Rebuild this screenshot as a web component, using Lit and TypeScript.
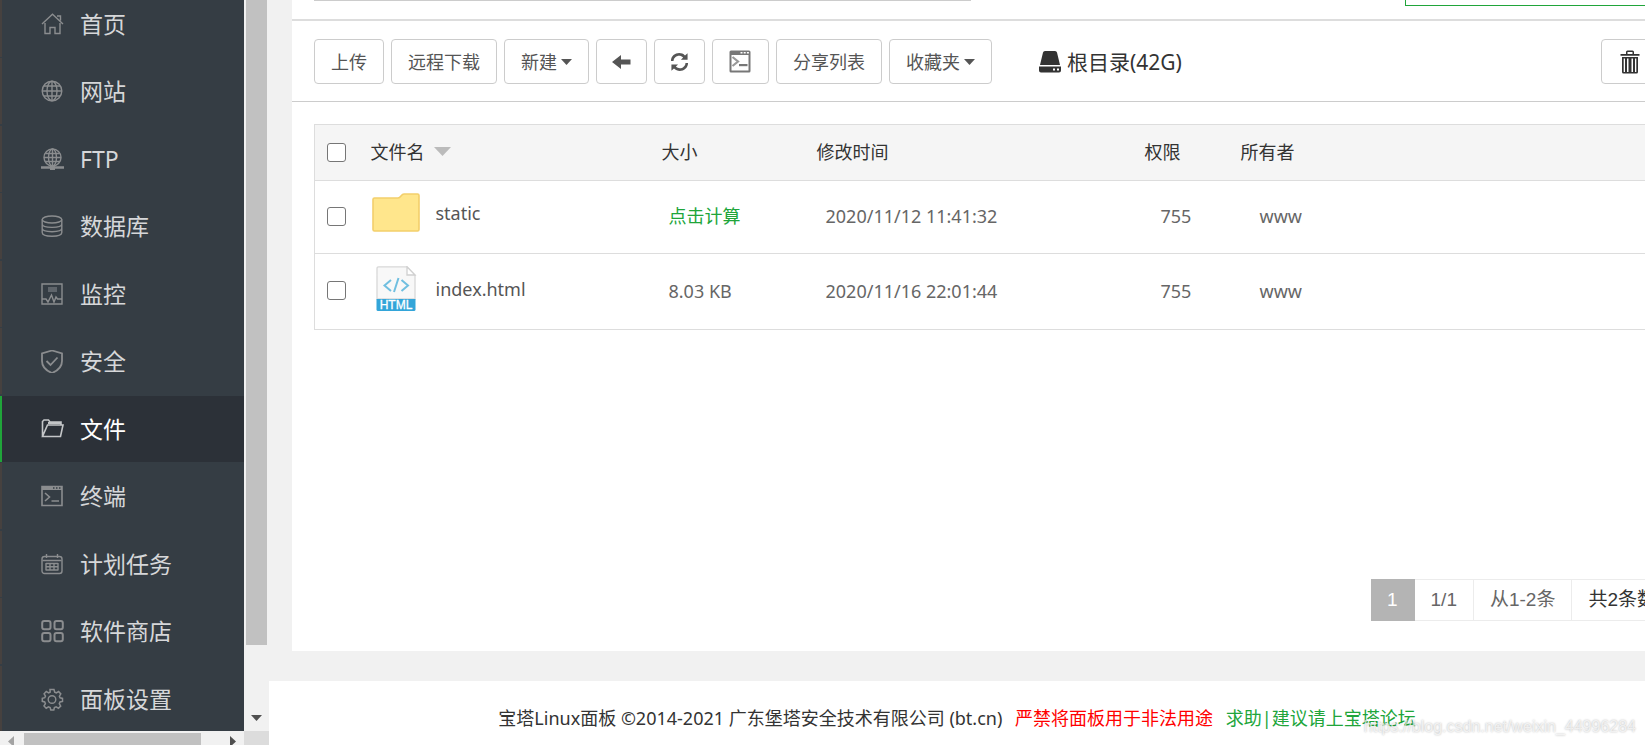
import { LitElement, html, css, svg } from "lit";
import { customElement } from "lit/decorators.js";
import { classMap } from "lit/directives/class-map.js";

const menuIcons: Record<string, unknown> = {
  home: svg`<path d="M1 11 11.500 1.300 22 11M16 3h3.500v4.500M4 10v10.500h5v-6h5v6h5V10"/>`,
  globe: svg`<circle cx="11" cy="11" r="9.800"/><ellipse cx="11" cy="11" rx="5" ry="9.800"/><path d="M11 1v20M1.500 11h19M3 6h16M3 16h16"/>`,
  ftp: svg`<circle cx="11.500" cy="9.500" r="8.500"/><ellipse cx="11.500" cy="9.500" rx="4" ry="8.500"/><path d="M11.500 1v17M3 9.500h17M4.500 5.500h14M4.500 13.500h14"/><path stroke-width="2.500" d="M0 19.500h23"/><path stroke-width="4" d="M9 20h5"/>`,
  database: svg`<ellipse cx="11" cy="4.500" rx="9.800" ry="3.500"/><path d="M1.200 4.500v13c0 5 19.600 5 19.600 0v-13M1.200 9c0 4.500 19.600 4.500 19.600 0M1.200 13.300c0 4.500 19.600 4.500 19.600 0"/>`,
  monitor: svg`<path d="M1 1h20v20H1z"/><path stroke="none" fill="#5f656b" d="M7 4h9v5H7z"/><path d="M1 16h4l2 3 3.500-7 2.500 7 2-5 1.500 2H21"/>`,
  shield: svg`<path stroke-width="1.800" d="M11 0.500 21 3.500V11c0 6-5 10-10 12C6 21 1 17 1 11V3.500z"/><path stroke-width="1.800" d="m5.500 11 4 4 7-7.500"/>`,
  folder: svg`<path stroke-width="1.600" d="M1.500 19V3.500L3 2h4.500L9 4h11v3M6.500 7H22l-2.500 11.500H1.500z"/><path stroke-width="2" d="M7 5h13"/>`,
  terminal: svg`<path stroke-width="1.600" d="M1 1.500h20v19H1z"/><path stroke="none" fill="currentColor" d="M1 1h20v4H1z"/><path stroke="#353d44" stroke-width="1.500" d="M12 3h1.500M15 3h1.500M18 3h1.500"/><path stroke-width="1.600" d="m4 8 4.500 4L4 16M10.500 16h7.500"/>`,
  calendar: svg`<rect x="1" y="3.500" width="20" height="17" rx="2.500"/><path d="M1.500 7.500h19M5.500 1v4M16.500 1v4M5 10.500h12M5 13.700h12M5 17h12M5 10v7.500M9 10v7.500M13 10v7.500M17 10v7.500"/>`,
  apps: svg`<g stroke-width="2"><rect x="1.200" y="1" width="8.300" height="8.300" rx="2"/><rect x="13.500" y="1" width="8.300" height="8.300" rx="2"/><rect x="1.200" y="13" width="8.300" height="8.300" rx="2"/><rect x="13.500" y="13" width="8.300" height="8.300" rx="2"/></g>`,
  gear: svg`<path stroke-width="1.500" d="m9 1.500 4 0 .7 2.600 1.600.7L17.600 3.500l2.200 2.400-1.400 2.300.7 1.600 2.400.6v3l-2.500.6-.7 1.700 1.400 2.300-2.300 2.200-2.300-1.300-1.700.7-.6 2.400h-3l-.7-2.500-1.600-.7-2.300 1.400-2.200-2.300 1.400-2.300-.7-1.700-2.400-.6v-3l2.500-.6.7-1.600-1.400-2.300 2.200-2.300 2.400 1.300 1.500-.7z"/><circle cx="11" cy="11.500" r="3.800"/>`,
};

const menu = [
  { icon: "home", label: "首页" },
  { icon: "globe", label: "网站" },
  { icon: "ftp", label: "FTP" },
  { icon: "database", label: "数据库" },
  { icon: "monitor", label: "监控" },
  { icon: "shield", label: "安全" },
  { icon: "folder", label: "文件", active: true },
  { icon: "terminal", label: "终端" },
  { icon: "calendar", label: "计划任务" },
  { icon: "apps", label: "软件商店" },
  { icon: "gear", label: "面板设置" },
];

const folderIcon = html`<svg class="file-icon" width="48" height="39" viewBox="0 0 48 39" aria-hidden="true">
  <path d="M1 6.500Q1 5 2.500 5H26c3 0 3-4 6-4h13.500Q47 1 47 2.500v34q0 1.500-1.500 1.500h-43Q1 38 1 36.500z" fill="#ffe68c" stroke="#f3cf6b" stroke-width="1.600"/>
</svg>`;

const htmlIcon = html`<svg class="file-icon" width="48" height="45" viewBox="0 0 48 45" aria-hidden="true">
  <path d="M5 33V2.500Q5 .8 6.500.8H35L43 9v24z" fill="#f8f8f8" stroke="#d8d8d8" stroke-width="1.300"/>
  <path d="M35 .8V9h8z" fill="#fff" stroke="#d0d0d0" stroke-width="1.300"/>
  <path d="m19 14-6.500 5.500L19 25M29.500 14l6.500 5.500-6.500 5.500M26.500 12l-4.500 14" fill="none" stroke="#70bfe0" stroke-width="2"/>
  <path d="M4.500 33h39v10.500q0 1.500-1.500 1.500H6q-1.500 0-1.500-1.500z" fill="#33a5d9"/>
  <text x="24" y="43" text-anchor="middle" font-family="Liberation Sans, sans-serif" font-size="12" fill="#fff" stroke="#fff" stroke-width=".3">HTML</text>
</svg>`;

const files = [
  { name: "static", icon: folderIcon, size: "", time: "2020/11/12 11:41:32", mode: "755", owner: "www" },
  { name: "index.html", icon: htmlIcon, size: "8.03 KB", time: "2020/11/16 22:01:44", mode: "755", owner: "www" },
];

@customElement("bt-sidebar")
class BtSidebar extends LitElement {
  static styles = css`
    :host {
      display: grid;
      grid-template-columns: 244px 25px;
      grid-template-rows: 1fr 14px;
      min-height: 0;
      font-family: "Noto Sans", "Noto Sans CJK SC", sans-serif;
    }
    .nav { background: #353d44; overflow: hidden; }
    .list { list-style: none; margin: -9px 0 0; padding: 0; }
    .item { height: 66px; margin-bottom: 1px; }
    .item:nth-child(even) { margin-bottom: 2px; }
    .link {
      display: flex; align-items: center; gap: 16px;
      box-sizing: border-box; height: 100%; padding-left: 39px;
      border-left: 2px solid #46413f;
      color: #d6d7d9; font-size: 23px; line-height: 34px; text-decoration: none;
    }
    .link.active { background: #2c3138; border-left-color: #20a53a; color: #fff; }
    .glyph { color: #8b8d8f; fill: none; stroke: currentColor; stroke-width: 1.4; flex: none; }
    .active .glyph { color: #c4c6c8; }
    .vbar { background: #f1f1f1; display: flex; flex-direction: column; padding: 0 2px; }
    .vthumb { flex: 0 0 calc(100% - 86px); background: #c1c1c1; }
    .down { width: 11px; height: 6px; margin: auto auto 10px; fill: #505050; }
    .hbar { background: #f1f1f1; display: flex; padding: 2px 8px 0; justify-content: space-between; overflow: hidden; }
    .hthumb { flex: 0 0 177px; background: #c1c1c1; margin-left: -20px; }
    .arrow { width: 6px; height: 11px; margin-top: 3px; fill: #a3a3a3; flex: none; }
    .arrow.dark { fill: #505050; }
    .corner { background: #dcdcdc; }
  `;
  render() {
    return html`
      <nav class="nav">
        <ul class="list">
          ${menu.map((m) => html`<li class="item">
            <a class=${classMap({ link: true, active: !!m.active })} href="#">
              <svg class="glyph" width="23" height="23" viewBox="0 0 23 23" aria-hidden="true">${menuIcons[m.icon]}</svg>
              <span>${m.label}</span>
            </a>
          </li>`)}
        </ul>
      </nav>
      <div class="vbar">
        <div class="vthumb"></div>
        <svg class="down" viewBox="0 0 11 6"><path d="M0 0h11L5.500 6z"/></svg>
      </div>
      <div class="hbar">
        <svg class="arrow" viewBox="0 0 6 11"><path d="M6 0v11L0 5.500z"/></svg>
        <div class="hthumb"></div>
        <svg class="arrow dark" viewBox="0 0 6 11"><path d="M0 0v11l6-5.500z"/></svg>
      </div>
      <div class="corner"></div>
    `;
  }
}

@customElement("app-root")
class AppRoot extends LitElement {
  static styles = css`
    :host {
      display: grid;
      grid-template-columns: auto minmax(0, 1fr);
      grid-template-rows: minmax(0, 1fr);
      height: 100vh;
      overflow: hidden;
      position: relative;
      background: #f1f1f1;
      color: #333;
      font-family: "Noto Sans", "Noto Sans CJK SC", sans-serif;
      font-size: 18px;
      line-height: 26px;
    }
    .main { display: flex; flex-direction: column; min-width: 0; overflow: hidden; }
    .panel {
      flex: 1; display: flex; flex-direction: column;
      margin: 0 -69px 30px 23px; background: #fff;
    }
    .pathbar {
      display: flex; justify-content: space-between; align-items: flex-start;
      height: 19px; padding: 0 22px; border-bottom: 2px solid #ddd;
    }
    .path {
      box-sizing: border-box; width: 657px; height: 42px; margin: -41px 0 0;
      border: 1px solid #ccc; outline: 0;
    }
    .search {
      box-sizing: border-box; width: 287px; height: 44px; margin: -38px 0 0;
      border: 1px solid #20a53a; background: #fff;
    }
    .toolbar {
      display: flex; align-items: center; gap: 7px;
      padding: 18px 22px 17px; border-bottom: 1px solid #ccc;
    }
    .btn {
      display: flex; align-items: center; justify-content: center; gap: 4px;
      box-sizing: border-box; height: 45px; padding: 0 16px;
      border: 1px solid #ccc; border-radius: 4px; background: #fff;
      color: #555; font: inherit; white-space: nowrap;
    }
    .btn.small { padding: 0 15px; }
    .btn svg { fill: currentColor; flex: none; }
    .disk { display: flex; align-items: center; gap: 6px; margin-left: 40px; font-size: 21px; line-height: 30px; }
    .btn.trash { margin-left: auto; padding: 0 51px 0 18px; color: #333; }
    .table {
      margin: 22px 22px 0; border-collapse: collapse; table-layout: fixed;
      min-width: calc(100% - 44px); border: 1px solid #ddd;
    }
    .c-check { width: 46px; } .c-name { width: 291px; } .c-size { width: 155px; }
    .c-time { width: 328px; } .c-mode { width: 96px; }
    th {
      height: 53px; padding: 0 0 2px 10px; background: #f5f5f5; border-bottom: 1px solid #ddd;
      font-weight: 400; text-align: left;
    }
    td { height: 70px; padding: 0 0 2px 17px; border-bottom: 1px solid #ddd; color: #666; }
    th.check, td.check { padding-left: 12px; }
    th.check { padding-bottom: 0; }
    td.name { height: auto; padding: 12px 0 18px 11px; vertical-align: top; }
    td.time { padding-left: 19px; }
    td.mode { padding-left: 26px; }
    td.owner { padding-left: 29px; }
    .box {
      appearance: none; display: block; box-sizing: border-box; width: 19px; height: 19px; margin: 0;
      border: 1px solid #767676; border-radius: 3px; background: #fff;
    }
    .sort { display: flex; align-items: center; gap: 9px; }
    .sort svg { fill: #bbb; }
    .file { display: flex; align-items: center; gap: 16px; color: #555; text-decoration: none; }
    .file-icon { display: block; }
    .green { color: #20a53a; text-decoration: none; }
    .pager {
      display: flex; justify-content: flex-end; margin: auto 22px 30px;
      font-family: "Liberation Sans", "Noto Sans CJK SC", sans-serif; font-size: 19px; line-height: 40px;
    }
    .page {
      padding: 0 16px; border: 1px solid #ececec; border-left: 0; color: #666; white-space: nowrap;
    }
    .page.current { background: #b4b4b4; border-color: #b4b4b4; color: #fff; }
    .page.total { color: #333; }
    .footer { padding: 24px 0 14px; background: #fff; text-align: center; white-space: nowrap; }
    .warn { color: #f00; margin: 0 8px; }
    .watermark {
      position: absolute; right: 9px; bottom: 7px;
      font-family: "Liberation Sans", sans-serif; font-size: 16px; line-height: 22px;
      color: rgba(255, 255, 255, 0.7); text-shadow: 0 0 2px rgba(0, 0, 0, 0.3);
    }
  `;
  render() {
    const caret = html`<svg width="11" height="6" viewBox="0 0 11 6" aria-hidden="true"><path d="M0 0h11L5.500 6z"/></svg>`;
    return html`
      <bt-sidebar></bt-sidebar>
      <main class="main">
        <section class="panel">
          <div class="pathbar">
            <input class="path" type="text" aria-label="路径">
            <button class="search" aria-label="搜索"></button>
          </div>
          <div class="toolbar">
            <button class="btn">上传</button>
            <button class="btn">远程下载</button>
            <button class="btn">新建${caret}</button>
            <button class="btn small" aria-label="后退">
              <svg width="19" height="16" viewBox="0 0 19 16"><path d="M0 8 9 1v4.500h9.500v5H9V15z"/></svg>
            </button>
            <button class="btn small" aria-label="刷新">
              <svg width="19" height="20" viewBox="0 0 20 20"><path d="M1 9C1 1 11-2 15.800 3.200L18.500.8V7.500h-7l2.300-2.300C10 1.500 4 4 3.700 9zM19 11c0 8-10 11-14.800 5.800L1.500 19.200V12.500h7L6.200 14.800C10 18.500 16 16 16.300 11z"/></svg>
            </button>
            <button class="btn small" aria-label="终端">
              <svg width="25" height="23" viewBox="0 0 25 23"><path fill-rule="evenodd" d="M3 .5h18q1.500 0 1.500 1.500v19q0 1.500-1.500 1.500H3q-1.500 0-1.500-1.500V2Q1.500.5 3 .5zM3.500 5v15.500h17V5z" opacity=".8"/><path d="M12.500 2h2v1.500h-2zM15.700 2h2v1.500h-2zM18.900 2h2v1.500h-2z" fill="#fff"/><path d="m4.500 7 5.500 4.500-5.500 4.500" fill="none" stroke="#999" stroke-width="2.200"/><path d="M11 14h8.500v2.200H11z" opacity=".8"/></svg>
            </button>
            <button class="btn">分享列表</button>
            <button class="btn">收藏夹${caret}</button>
            <div class="disk">
              <svg width="22" height="22" viewBox="0 0 22 22" fill="#333" aria-hidden="true"><path d="M4 1.500Q4.300 0 6 0h10q1.700 0 2 1.500L21 14H1z"/><path fill-rule="evenodd" d="M0 15.500h22v4q0 2-2 2H2q-2 0-2-2zM14 17.500v2h2v-2zM18 17.500v2h2v-2z"/></svg>
              <span>根目录(42G)</span>
            </div>
            <button class="btn trash" aria-label="回收站">
              <svg width="20" height="24" viewBox="0 0 20 24"><path fill-rule="evenodd" d="M6 4V2q0-1.500 1.500-1.500h5Q14 .5 14 2v2h5.500v1.700H.5V4zM7.500 4h5V2h-5zM2 7h16v15q0 1.500-1.500 1.500h-13Q2 23.500 2 22zM3.700 8.500V22H5V8.500zM7 8.500V22h1.500V8.500zM11.500 8.500V22H13V8.500zM15 8.500V22h1.300V8.500z"/></svg>
            </button>
          </div>
          <table class="table">
            <colgroup>
              <col class="c-check"><col class="c-name"><col class="c-size"><col class="c-time"><col class="c-mode"><col>
            </colgroup>
            <thead>
              <tr>
                <th class="check"><input class="box" type="checkbox" aria-label="全选"></th>
                <th><span class="sort">文件名<svg width="17" height="9" viewBox="0 0 17 9" aria-hidden="true"><path d="M0 0h17L8.500 9z"/></svg></span></th>
                <th>大小</th><th>修改时间</th><th>权限</th><th>所有者</th>
              </tr>
            </thead>
            <tbody>
              ${files.map((f) => html`<tr>
                <td class="check"><input class="box" type="checkbox" aria-label=${f.name}></td>
                <td class="name"><a class="file" href="#">${f.icon}<span>${f.name}</span></a></td>
                <td>${f.size || html`<a class="green" href="#">点击计算</a>`}</td>
                <td class="time">${f.time}</td>
                <td class="mode">${f.mode}</td>
                <td class="owner">${f.owner}</td>
              </tr>`)}
            </tbody>
          </table>
          <div class="pager">
            <span class="page current">1</span>
            <span class="page">1/1</span>
            <span class="page">从1-2条</span>
            <span class="page total">共2条数据</span>
          </div>
        </section>
        <footer class="footer">
          宝塔Linux面板 ©2014-2021 广东堡塔安全技术有限公司 (bt.cn)
          <span class="warn">严禁将面板用于非法用途</span>
          <a class="green" href="#">求助|建议请上宝塔论坛</a>
        </footer>
      </main>
      <div class="watermark">https://blog.csdn.net/weixin_44996284</div>
    `;
  }
}
